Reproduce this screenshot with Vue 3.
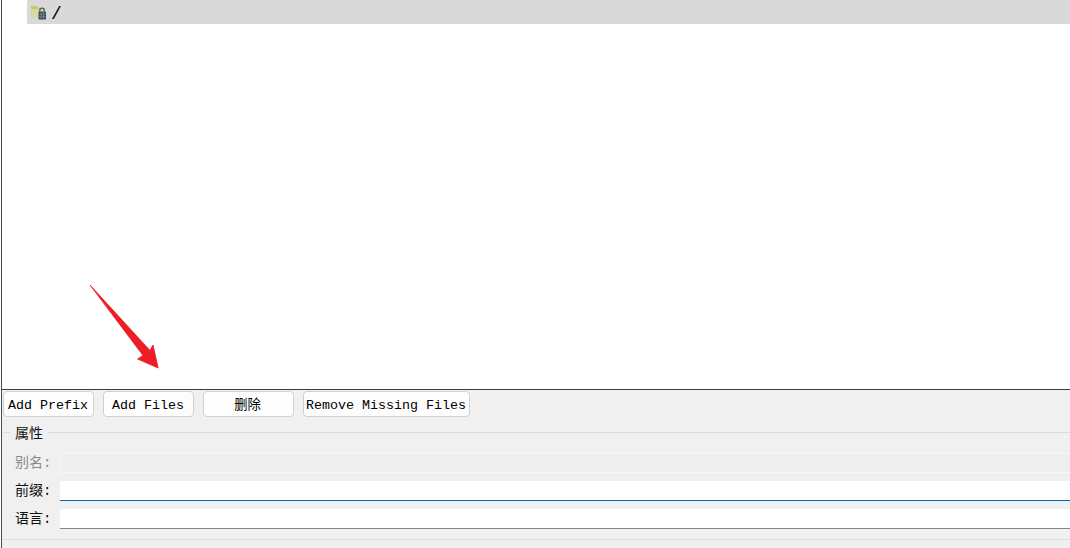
<script setup>
const buttons = [
  { label: 'Add Prefix', width: 91 },
  { label: 'Add Files', width: 91 },
  { label: '删除', width: 91, cjk: true },
  { label: 'Remove Missing Files', width: 167 },
]
const fields = [
  { label: '别名:', kind: 'disabled' },
  { label: '前缀:', kind: 'focused' },
  { label: '语言:', kind: 'normal' },
]
</script>

<template>
  <div class="window">
    <section class="tree">
      <div class="row">
        <svg class="icon" width="16" height="16" viewBox="0 0 16 16">
          <path d="M0 1 H6 L7.5 3 H14 V13 H0 Z" fill="#c4c47c" />
          <rect x="0" y="4" width="14" height="9" fill="#d8d8a2" />
          <path d="M8.8 6.5 V5.2 A2.2 2.2 0 0 1 13.2 5.2 V6.5" fill="none" stroke="#3f5250" stroke-width="1.2" />
          <rect x="7.5" y="6.5" width="7.5" height="8" rx="1" fill="#2f4558" />
          <path d="M7.5 9.2 H15 M7.5 11.8 H15 M10 6.5 V14.5 M12.5 6.5 V14.5" stroke="#7f9484" stroke-width=".8" />
        </svg>
        <span class="path">/</span>
      </div>
      <svg class="arrow" width="74" height="88" viewBox="0 0 74 88">
        <path d="M2 1 L62 66.5 L65 61 L70.2 84 L49.5 75 L55 71.5 Z" fill="#ee1c25" stroke="#ee1c25" stroke-width=".8" stroke-linejoin="round" />
      </svg>
    </section>
    <section class="panel">
      <div class="buttons">
        <button
          v-for="b in buttons"
          :key="b.label"
          class="btn"
          :class="{ cjk: b.cjk }"
          :style="{ width: b.width + 'px' }"
        >{{ b.label }}</button>
      </div>
      <fieldset class="group">
        <legend class="legend">属性</legend>
        <div v-for="f in fields" :key="f.label" class="field">
          <label class="label" :class="{ muted: f.kind === 'disabled' }">{{ f.label }}</label>
          <div class="input" :class="f.kind"></div>
        </div>
      </fieldset>
    </section>
  </div>
</template>

<style scoped>
.window {
  width: 1070px;
  height: 548px;
  box-sizing: border-box;
  border-left: 1px solid #4a4a4a;
  margin-left: 1px;
  background: #f0f0f0;
  display: flex;
  flex-direction: column;
  overflow: hidden;
  font-family: "Liberation Mono", "Noto Sans CJK SC", monospace;
  font-size: 13.33px;
  color: #000;
}
.tree {
  position: relative;
  height: 389px;
  flex: none;
  box-sizing: border-box;
  background: #fff;
  padding-left: 25px;
}
.row {
  height: 24px;
  background: #d9d9d9;
  display: flex;
  align-items: center;
  padding-left: 4px;
}
.icon {
  flex: none;
  margin-top: 1px;
  margin-right: 5px;
}
.path {
  font-size: 18px;
  line-height: 18px;
  margin-top: 3px;
  margin-left: -1px;
  color: #000;
}
.arrow {
  position: absolute;
  left: 86px;
  top: 284px;
}
.panel {
  flex: 1;
  border-top: 1px solid #3c3c3c;
  padding: 1px 0 0 1px;
}
.buttons {
  display: flex;
  gap: 9px;
}
.btn {
  height: 26px;
  box-sizing: border-box;
  padding: 3px 1px 0 0;
  background: #fdfdfd;
  border: 1px solid #d0d0d0;
  border-radius: 4px;
  font: inherit;
  color: #000;
  white-space: nowrap;
  text-align: center;
}
.btn.cjk {
  padding: 0 2px 1px 0;
}
.group {
  margin: 7px 0 0 0;
  padding: 13px 0 0 12px;
  height: 116px;
  box-sizing: border-box;
  border: 0;
  border-top: 1px solid #dcdcdc;
  border-bottom: 1px solid #dddddd;
  min-width: 0;
}
.legend {
  padding: 0 5px;
  margin-left: -5px;
  font-family: "Noto Sans CJK SC", sans-serif;
  font-size: 14px;
  line-height: 16px;
  color: #111;
}
.field {
  display: flex;
  align-items: center;
  height: 20px;
  margin-bottom: 8px;
}
.label {
  width: 45px;
  flex: none;
  font-family: "Liberation Mono", "Noto Sans CJK SC", monospace;
  font-size: 14px;
  line-height: 20px;
  color: #111;
}
.label.muted {
  color: #8a8a8a;
}
.input {
  flex: 1;
  height: 20px;
  box-sizing: border-box;
  background: #fff;
}
.input.disabled {
  background: #eeeeee;
  border: 1px solid #f8f8f8;
  border-right: 0;
}
.input.focused {
  border-bottom: 1px solid #0067c0;
}
.input.normal {
  border-bottom: 1px solid #858585;
}
</style>
